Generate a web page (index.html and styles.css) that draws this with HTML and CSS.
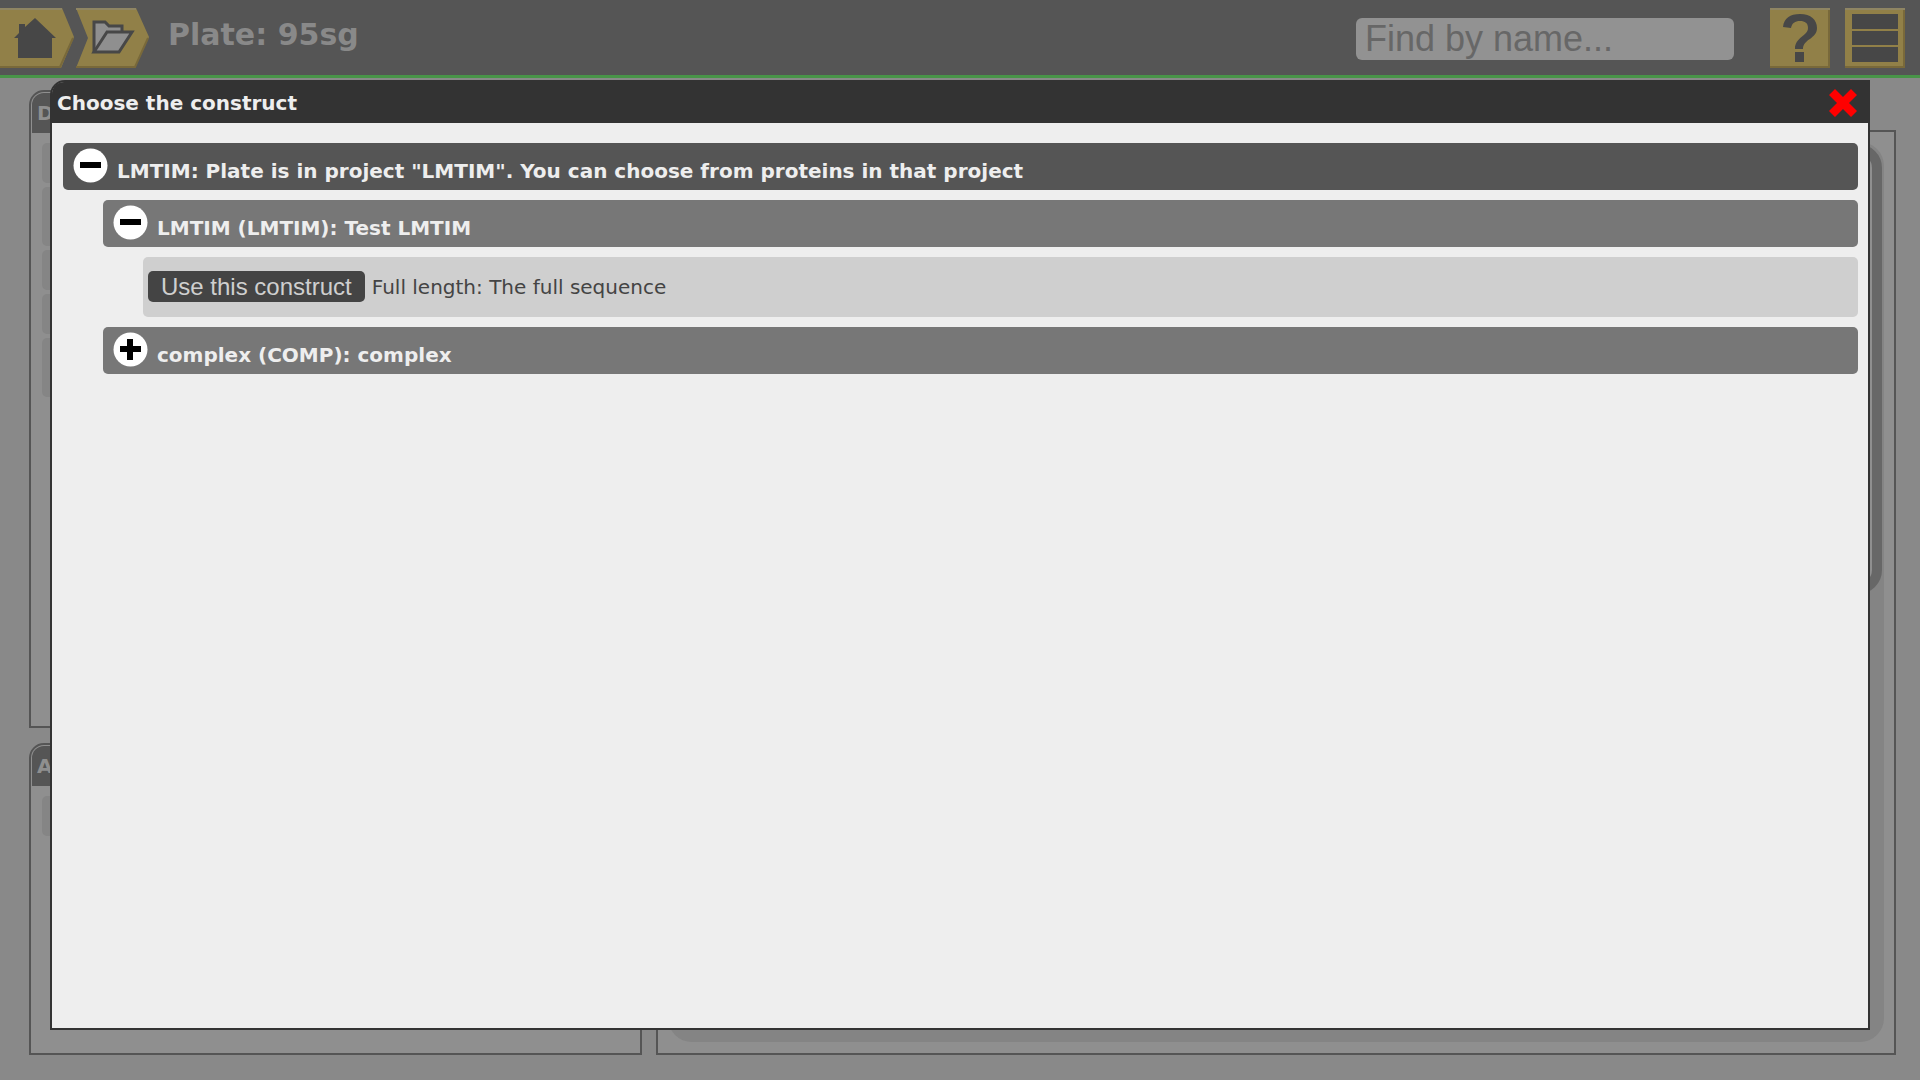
FILE: index.html
```html
<!DOCTYPE html>
<html lang="en">
<head>
    <meta charset="UTF-8">
    <meta name="viewport" content="width=device-width, initial-scale=1.0">
    <title>Plate: 95sg</title>
    <link rel="stylesheet" href="styles.css">
</head>
<body>
    <header class="page-header">
        <nav class="crumbs">
            <a class="crumb" href="#" aria-label="Home">
                <svg width="75" height="60" viewBox="0 0 75 60">
                    <path d="M0 0H62L74 29L61 60H0Z" fill="#918048"/>
                    <path d="M0 1H62" stroke="#8f8563" stroke-width="2"/>
                    <path d="M0 59H60L73 30" fill="none" stroke="#79693a" stroke-width="2"/>
                    <path d="M14 30L19 25V16H25V19L35 10L56 30H52V50H18V30Z" fill="#474747"/>
                </svg>
            </a>
            <a class="crumb" href="#" aria-label="Folder">
                <svg width="75" height="60" viewBox="0 0 75 60">
                    <path d="M1 0H61L74 29L60 60H1L13 30Z" fill="#918048"/>
                    <path d="M1 1H61" stroke="#8f8563" stroke-width="2"/>
                    <path d="M1 59H60L73 30" fill="none" stroke="#79693a" stroke-width="2"/>
                    <path d="M19 44V14H30L34 18H47V24" fill="#8f8f8f" stroke="#474747" stroke-width="3"/>
                    <path d="M19 44L32 24H57L44 44Z" fill="#8f8f8f" stroke="#474747" stroke-width="3"/>
                </svg>
            </a>
        </nav>
        <h1>Plate: 95sg</h1>
        <input class="search" type="text" placeholder="Find by name..." aria-label="Find by name">
        <button class="tool" type="button" aria-label="Help">
            <svg width="60" height="60" viewBox="0 0 60 60">
                <path d="M13 19C14 10 20 6 30 6C41 6 47 12 47 20C47 31 33 31 33 41H25C25 29 38 28 38 20C38 15 35 13 30 13C25 13 22 15 21 20Z" fill="#474747"/>
                <rect x="25" y="44" width="9" height="10" fill="#474747"/>
            </svg>
        </button>
        <button class="tool" type="button" aria-label="Menu">
            <svg width="60" height="60" viewBox="0 0 60 60">
                <path d="M7 6H53V21H7ZM7 23H53V37H7ZM7 39H53V54H7Z" fill="#474747"/>
            </svg>
        </button>
    </header>

    <main class="page">
        <div class="left-column">
            <section class="panel panel-details">
                <h2>D</h2>
                <div class="field"></div>
                <div class="field tall"></div>
                <div class="field"></div>
                <div class="field"></div>
                <div class="field tall"></div>
            </section>
            <section class="panel">
                <h2>A</h2>
                <div class="field"></div>
            </section>
        </div>
        <section class="tab-body">
            <div class="plate-area">
                <div class="plate"></div>
            </div>
        </section>
    </main>

    <div class="modal" role="dialog" aria-labelledby="modal-title">
        <div class="modal-header">
            <h2 id="modal-title">Choose the construct</h2>
            <button class="close" type="button" aria-label="Close">
                <svg width="30" height="30" viewBox="0 0 30 30">
                    <path d="M7 1L15 9L23 1L29 7L21 15L29 23L23 29L15 21L7 29L1 23L9 15L1 7Z" fill="#f00"/>
                </svg>
            </button>
        </div>
        <div class="modal-body">
            <div class="tree-row project">
                <button class="toggle" type="button" aria-label="Collapse">
                    <svg width="35" height="35" viewBox="0 0 35 35">
                        <circle cx="17.5" cy="17.5" r="17" fill="#fff"/>
                        <path d="M7 14H28V20H7Z"/>
                    </svg>
                </button>
                <h3>LMTIM: Plate is in project "LMTIM". You can choose from proteins in that project</h3>
            </div>
            <div class="tree-children">
                <div class="tree-row">
                    <button class="toggle" type="button" aria-label="Collapse">
                        <svg width="35" height="35" viewBox="0 0 35 35">
                            <circle cx="17.5" cy="17.5" r="17" fill="#fff"/>
                            <path d="M7 14H28V20H7Z"/>
                        </svg>
                    </button>
                    <h3>LMTIM (LMTIM): Test LMTIM</h3>
                </div>
                <div class="tree-children">
                    <div class="construct">
                        <button class="use" type="button">Use this construct</button>
                        <span>Full length: The full sequence</span>
                    </div>
                </div>
                <div class="tree-row">
                    <button class="toggle" type="button" aria-label="Expand">
                        <svg width="35" height="35" viewBox="0 0 35 35">
                            <circle cx="17.5" cy="17.5" r="17" fill="#fff"/>
                            <path d="M7 14H14V7H20V14H28V20H20V28H14V20H7Z"/>
                        </svg>
                    </button>
                    <h3>complex (COMP): complex</h3>
                </div>
            </div>
        </div>
    </div>
</body>
</html>
```
FILE: styles.css
```css
* {
    box-sizing: border-box;
}
body {
    margin: 0;
    min-height: 100vh;
    display: flex;
    flex-direction: column;
    font-family: Verdana, "DejaVu Sans", sans-serif;
    font-size: 20px;
    color: #444;
    background-color: #898989;
}
h1, h2, h3 {
    margin: 0;
    font-size: 20px;
}
button {
    border: none;
    padding: 0;
    cursor: pointer;
}
svg {
    display: block;
}
.page-header {
    display: flex;
    align-items: flex-start;
    height: 78px;
    padding: 8px 15px 0 0;
    background-color: #555;
    border-bottom: 3px solid #489448;
}
.crumbs {
    display: flex;
}
.page-header h1 {
    flex: 1;
    padding: 9px 0 0 18px;
    font-size: 30px;
    line-height: 36px;
    color: #898989;
}
.search {
    width: 378px;
    height: 42px;
    margin: 10px 21px 0 0;
    padding: 0 9px;
    border: none;
    border-radius: 6px;
    background-color: #929292;
    font-family: "Liberation Sans", Arial, sans-serif;
    font-size: 36px;
}
.search::placeholder {
    color: #676767;
}
.tool {
    margin-left: 15px;
    background-color: #918048;
    box-shadow: inset 0 2px #8f8563, inset -2px -2px #79693a;
}
.page {
    flex: 1;
    display: flex;
    gap: 14px;
    padding: 12px 24px 25px 29px;
}
.left-column {
    flex: 0 0 613px;
    display: flex;
    flex-direction: column;
    gap: 15px;
}
.panel {
    flex: 1;
    padding: 1px;
    border: 2px solid #555;
    border-radius: 15px 15px 0 0;
    background-color: #8f8f8f;
}
.panel-details {
    flex: 0 0 638px;
}
.panel h2 {
    padding: 9px 5px 8px;
    line-height: 23px;
    color: #8f8f8f;
    background-color: #555;
    border-radius: 12px 12px 0 0;
}
.field {
    height: 40px;
    margin: 4px 10px 0;
    border-radius: 5px;
    background-color: #858585;
}
.field.tall {
    height: 59px;
}
.panel h2 + .field {
    margin-top: 10px;
}
.tab-body {
    flex: 1;
    margin-top: 40px;
    padding: 10px 10px 11px;
    border: 2px solid #555;
    background-color: #8f8f8f;
}
.plate-area {
    height: 100%;
    padding: 2px;
    border-radius: 24px;
    background-color: #848484;
}
.plate {
    height: 450px;
    border: 10px solid #676767;
    border-radius: 24px;
    background-color: #8f8f8f;
}
.modal {
    position: fixed;
    top: 80px;
    right: 50px;
    bottom: 50px;
    left: 50px;
    border: 2px solid #333;
    border-radius: 15px 0 0 0;
    background-color: #eee;
}
.modal-header {
    display: flex;
    align-items: center;
    justify-content: space-between;
    height: 41px;
    padding: 0 10px 0 5px;
    border-radius: 12px 0 0 0;
    color: #eee;
    background-color: #333;
}
.close {
    background: none;
}
.modal-body {
    display: flex;
    flex-direction: column;
    gap: 10px;
    padding: 20px 10px 20px 11px;
}
.tree-children {
    display: flex;
    flex-direction: column;
    gap: 10px;
    padding-left: 40px;
}
.tree-row {
    display: flex;
    align-items: flex-start;
    gap: 9px;
    height: 47px;
    padding: 5px 10px;
    border-radius: 5px;
    color: #eee;
    background-color: #777;
}
.tree-row.project {
    background-color: #555;
}
.tree-row h3 {
    padding-top: 11px;
    line-height: 24px;
}
.toggle {
    background: none;
}
.construct {
    display: flex;
    align-items: center;
    gap: 7px;
    height: 60px;
    padding: 0 5px 1px;
    border-radius: 5px;
    background-color: #cfcfcf;
}
.use {
    height: 31px;
    padding: 0 13px;
    border-radius: 5px;
    font-family: "Liberation Sans", Arial, sans-serif;
    font-size: 24px;
    color: #cfcfcf;
    background-color: #444;
}
```
